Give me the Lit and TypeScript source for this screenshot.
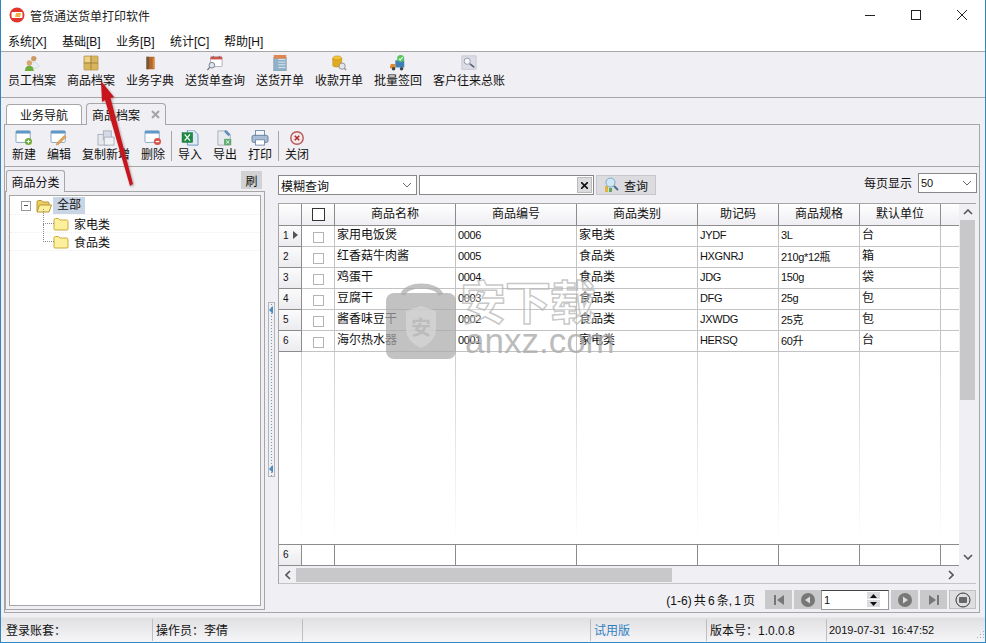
import { LitElement, html, css } from 'lit';
import { customElement } from 'lit/decorators.js';

const icons: Record<string, unknown> = {
  staff: html`<svg width="18" height="18" viewBox="0 0 18 18"><circle cx="11" cy="4" r="3" fill="#c99a63"/><path d="M6 14c0-4 3-6 5-6s5 1 6 5l-3 2z" fill="#e8eef2" stroke="#b8c4cc" stroke-width=".5"/><circle cx="6" cy="9" r="3" fill="#d8a673"/><path d="M1 18c0-4 2-6 5-6s5 2 5 6z" fill="#6fae3a"/></svg>`,
  goods: html`<svg width="18" height="18" viewBox="0 0 18 18"><rect x="1" y="1" width="16" height="16" rx="1" fill="#d9b45c" stroke="#a88a45" stroke-width=".6"/><path d="M9 1v16M1 9h16" stroke="#8f7438" stroke-width=".8"/><rect x="2" y="2" width="6" height="6" fill="#ecd28a"/></svg>`,
  dict: html`<svg width="18" height="18" viewBox="0 0 18 18"><rect x="5" y="2" width="9" height="14" fill="#b5662b"/><rect x="5" y="2" width="3" height="14" fill="#6f5a3c"/><rect x="12" y="3" width="2" height="12" fill="#d98c3e"/></svg>`,
  query: html`<svg width="18" height="18" viewBox="0 0 18 18"><rect x="4" y="2" width="13" height="11" rx="1" fill="#fff" stroke="#9a9aa4" stroke-width=".8"/><rect x="4" y="2" width="13" height="3" fill="#d9534a"/><path d="M7 1v3M14 1v3" stroke="#666" stroke-width="1"/><circle cx="5.500" cy="11.500" r="3.200" fill="#dde6f0" stroke="#6c7684" stroke-width="1"/><path d="M3 14l-2.500 3" stroke="#6c7684" stroke-width="1.500"/></svg>`,
  delivery: html`<svg width="18" height="18" viewBox="0 0 18 18"><rect x="2" y="3" width="14" height="15" fill="#8fb2c9" stroke="#7a8d9a" stroke-width=".6"/><rect x="2" y="0" width="14" height="4" fill="#e0854f"/><path d="M7 5h8M7 8h8M7 11h8M7 14h8" stroke="#dfe8ee" stroke-width="1"/></svg>`,
  coins: html`<svg width="18" height="18" viewBox="0 0 18 18"><ellipse cx="7" cy="4" rx="5" ry="3" fill="#f2c230" stroke="#b98a16" stroke-width=".6"/><path d="M2 4v8c0 2 10 2 10 0V4c0 2-10 2-10 0z" fill="#e3a91f" stroke="#b98a16" stroke-width=".6"/><circle cx="12.500" cy="12.500" r="3.500" fill="#e6e6ea" stroke="#8c8c94" stroke-width="1"/><path d="M15 15l2 2" stroke="#8c8c94" stroke-width="1.500"/></svg>`,
  truck: html`<svg width="18" height="18" viewBox="0 0 18 18"><rect x="6" y="6" width="10" height="8" fill="#3f7fb8"/><path d="M1 10h5v5H0v-2z" fill="#e08a2c"/><circle cx="4" cy="15.500" r="2" fill="#444"/><circle cx="13" cy="15.500" r="2" fill="#444"/><circle cx="12" cy="4" r="4" fill="#55c65a"/><path d="M10 4l1.500 1.500L14.300 2.500" stroke="#fff" stroke-width="1.200" fill="none"/></svg>`,
  ledger: html`<svg width="18" height="18" viewBox="0 0 18 18"><rect x="1" y="1" width="16" height="15" fill="#dcdce6" stroke="#b4b4c0" stroke-width=".6"/><circle cx="7" cy="7" r="3.500" fill="#f4f6fa" stroke="#8d93a3" stroke-width="1"/><path d="M10 10l5 4" stroke="#5c6270" stroke-width="1.800"/></svg>`,
  add: html`<svg width="20" height="18" viewBox="0 0 20 18"><rect x="1" y="1" width="16" height="13" rx="1" fill="#fff" stroke="#7d9fbd"/><rect x="1" y="1" width="16" height="3" fill="#5f97c9"/><circle cx="15" cy="13" r="4" fill="#70ad3a"/><path d="M13 13h4M15 11v4" stroke="#fff" stroke-width="1.200"/></svg>`,
  edit: html`<svg width="20" height="18" viewBox="0 0 20 18"><rect x="1" y="1" width="16" height="13" rx="1" fill="#fff" stroke="#7d9fbd"/><rect x="1" y="1" width="16" height="3" fill="#5f97c9"/><path d="M8 14l8-8 2 2-8 8-3 1z" fill="#e3a659" stroke="#b97f3a" stroke-width=".5"/></svg>`,
  copy: html`<svg width="20" height="18" viewBox="0 0 20 18"><rect x="1" y="5" width="11" height="12" fill="#e6e9ee" stroke="#a6adb8"/><rect x="7" y="1" width="9" height="10" fill="#d3dbe6" stroke="#a6adb8"/><rect x="8" y="8" width="11" height="9" fill="#f0f2f5" stroke="#a6adb8"/></svg>`,
  del: html`<svg width="20" height="18" viewBox="0 0 20 18"><rect x="1" y="1" width="16" height="13" rx="1" fill="#fff" stroke="#7d9fbd"/><rect x="1" y="1" width="16" height="3" fill="#5f97c9"/><circle cx="15" cy="13" r="4" fill="#d9534a"/><path d="M13 13h4" stroke="#fff" stroke-width="1.400"/></svg>`,
  imp: html`<svg width="20" height="18" viewBox="0 0 20 18"><path d="M7 0h7l5 5v12H7z" fill="#dfeaf6" stroke="#5f8fbf"/><rect x="1" y="3" width="12" height="11" fill="#1f8a45" stroke="#176b35" stroke-width=".5"/><path d="M4 5l6 7M10 5l-6 7" stroke="#fff" stroke-width="1.400"/></svg>`,
  exp: html`<svg width="20" height="18" viewBox="0 0 20 18"><path d="M2 1h10l4 4v12H2z" fill="#e8eaee" stroke="#a7adb6"/><path d="M11 0l5 5-2 2-5-5z" fill="#5f8fbf"/><rect x="9" y="10" width="8" height="7" fill="#5aa86a"/><path d="M11 11.500l4 4M15 11.500l-4 4" stroke="#fff"/></svg>`,
  print: html`<svg width="20" height="18" viewBox="0 0 20 18"><rect x="5" y="0.500" width="10" height="7" fill="#f5f7fa" stroke="#6d88a8"/><rect x="1" y="6" width="18" height="8" rx="2" fill="#a9bed6" stroke="#5f7894"/><rect x="5" y="11" width="10" height="6" fill="#fff" stroke="#6d88a8"/></svg>`,
  close: html`<svg width="20" height="18" viewBox="0 0 20 18"><circle cx="10" cy="9" r="7" fill="#f4e9e9" stroke="#b65a5a" stroke-width="1.600"/><path d="M7.500 6.500l5 5M12.500 6.500l-5 5" stroke="#b02a2a" stroke-width="1.800"/></svg>`,
};

const nav = [
  ['staff', '员工档案'], ['goods', '商品档案'], ['dict', '业务字典'], ['query', '送货单查询'],
  ['delivery', '送货开单'], ['coins', '收款开单'], ['truck', '批量签回'], ['ledger', '客户往来总账'],
];
const actions = [
  ['add', '新建'], ['edit', '编辑'], ['copy', '复制新增'], ['del', '删除'], null,
  ['imp', '导入'], ['exp', '导出'], ['print', '打印'], null, ['close', '关闭'],
];
const menus = ['系统[X]', '基础[B]', '业务[B]', '统计[C]', '帮助[H]'];
const heads = ['商品名称', '商品编号', '商品类别', '助记码', '商品规格', '默认单位'];
const rows = [
  ['家用电饭煲', '0006', '家电类', 'JYDF', '3L', '台'],
  ['红香菇牛肉酱', '0005', '食品类', 'HXGNRJ', '210g*12瓶', '箱'],
  ['鸡蛋干', '0004', '食品类', 'JDG', '150g', '袋'],
  ['豆腐干', '0003', '食品类', 'DFG', '25g', '包'],
  ['酱香味豆干', '0002', '食品类', 'JXWDG', '25克', '包'],
  ['海尔热水器', '0001', '家电类', 'HERSQ', '60升', '台'],
];

const folder = () => html`<svg width="16" height="14" viewBox="0 0 16 14">
  <path d="M1 3q0-1.500 1.500-1.500h3L7 3h6.500Q15 3 15 4.500V12q0 1-1 1H2q-1 0-1-1z" fill="#fdf09c" stroke="#c9a93c"/>
</svg>`;
const openFolder = () => html`<svg width="16" height="14" viewBox="0 0 16 14">
  <path d="M1 12V3q0-1.500 1.500-1.500h3L7 3h5q1 0 1 1v2" fill="#eccf62" stroke="#b8962f"/>
  <path d="M1 13l2.500-7H15.500L13 13z" fill="#fdf09c" stroke="#b8962f" stroke-linejoin="round"/>
</svg>`;

@customElement('app-root')
class AppRoot extends LitElement {
  static styles = css`
    :host {
      display: block;
      font-family: "Liberation Sans", "Noto Sans CJK SC", sans-serif;
      font-size: 12px;
      color: #111;
    }
    .win {
      position: relative;
      width: 986px;
      height: 643px;
      box-sizing: border-box;
      display: flex;
      flex-direction: column;
      border: 1px solid #2f86c0;
      border-top: none;
      background: #f0eff3;
      overflow: hidden;
    }
    .title {
      height: 30px;
      display: flex;
      align-items: center;
      background: #fff;
      padding-left: 8px;
      flex: none;
    }
    .title .name { margin-left: 5px; color: #222; }
    .win-btns { margin-left: auto; display: flex; }
    .win-btns span { width: 46px; height: 30px; display: flex; align-items: center; justify-content: center; }
    .menu {
      height: 21px;
      display: flex;
      align-items: center;
      gap: 14px;
      padding-left: 7px;
      background: #fff;
      flex: none;
    }
    .menu span { width: 40px; white-space: nowrap; }
    .nav {
      height: 47px;
      box-sizing: border-box;
      border-top: 1px solid #a6a6a6;
      border-bottom: 1px solid #a6a6a6;
      display: flex;
      gap: 11px;
      padding-left: 7px;
      flex: none;
    }
    .tool {
      display: flex;
      flex-direction: column;
      align-items: center;
      white-space: nowrap;
      line-height: 16px;
    }
    .nav .tool svg { width: 16px; height: 16px; margin-top: 3px; margin-bottom: 2px; }
    .tabs {
      height: 26px;
      display: flex;
      align-items: flex-end;
      padding-left: 5px;
      gap: 4px;
      flex: none;
    }
    .tab {
      height: 20px;
      width: 76px;
      box-sizing: border-box;
      border: 1px solid #a6a6a6;
      border-bottom: none;
      border-radius: 4px 4px 0 0;
      display: flex;
      align-items: center;
      justify-content: center;
      background: #fff;
    }
    .tab.on {
      height: 22px;
      width: 80px;
      background: #f0eff3;
      justify-content: flex-start;
      padding-left: 5px;
      margin-bottom: -1px;
      position: relative;
    }
    .tab.on svg { margin-left: 11px; }
    .panel {
      flex: 1;
      min-height: 0;
      margin: 0 5px 3px 3px;
      border: 1px solid #a6a6a6;
      display: flex;
      flex-direction: column;
    }
    .actions {
      height: 42px;
      box-sizing: border-box;
      border-bottom: 1px solid #a6a6a6;
      display: flex;
      gap: 11px;
      padding-left: 7px;
      flex: none;
    }
    .actions .tool svg { width: 18px; height: 16px; margin-top: 5px; margin-bottom: 1px; }
    .sep { width: 1px; height: 30px; background: #a6a6a6; margin: 6px -5px 0 -5px; }
    .body { flex: 1; min-height: 0; display: flex; }
    .left { width: 260px; flex: none; display: flex; flex-direction: column; padding-top: 3px; box-sizing: border-box; }
    .left-head { height: 21px; display: flex; flex: none; align-items: flex-start; }
    .left-tab {
      margin-left: 1px;
      width: 59px;
      height: 22px;
      box-sizing: border-box;
      border: 1px solid #a6a6a6;
      border-bottom: none;
      border-radius: 3px 3px 0 0;
      display: flex;
      align-items: center;
      justify-content: center;
      background: #f0eff3;
      position: relative;
    }
    .refresh {
      margin-left: auto;
      margin-right: 3px;
      margin-top: 1px;
      width: 21px;
      height: 18px;
      background: #d2d2d5;
      display: flex;
      align-items: center;
      justify-content: center;
    }
    .tree-box {
      flex: 1;
      margin-bottom: 2px;
      border: 1px solid #a6a6a6;
      padding: 3px;
      display: flex;
    }
    .tree {
      flex: 1;
      background: #fff;
      border: 1px solid #a6a6a6;
      padding-top: 1px;
    }
    .node {
      height: 18px;
      display: flex;
      align-items: center;
      border-bottom: 1px dotted #eee;
      box-sizing: border-box;
      position: relative;
    }
    .node .minus {
      width: 8px; height: 8px; margin-left: 11px; border: 1px solid #999; display: flex; align-items: center; justify-content: center;
      background: #fff;
    }
    .node .minus::after { content: ""; width: 4px; height: 1px; background: #555; }
    .node.root svg { margin-left: 5px; }
    .sel { margin-left: 1px; padding: 0 4px; background: #c9d5e4; line-height: 17px; }
    .node.leaf svg { margin-left: 43px; }
    .node.leaf span { margin-left: 5px; }
    .node.leaf::before {
      content: ""; position: absolute; left: 33px; top: -6px; width: 10px; height: 14px;
      border-left: 1px dotted #888; border-bottom: 1px dotted #888;
    }
    .node.leaf.last::before { top: -9px; height: 17px; }
    .split { width: 13px; flex: none; display: flex; align-items: center; justify-content: center; }
    .split .grip {
      width: 7px;
      height: 175px;
      box-sizing: border-box;
      border: 1px solid #b5b5b8;
      background: radial-gradient(circle, #6f9cc4 0.7px, transparent 0.9px) 1px 0 / 3px 3px repeat-y;
      position: relative;
    }
    .grip::before, .grip::after {
      content: ""; position: absolute; left: 0; border: 4px solid transparent; border-right: 4px solid #4a8ec4; border-left: none;
    }
    .grip::before { top: 3px; }
    .grip::after { bottom: 3px; }
    .right { flex: 1; min-width: 0; display: flex; flex-direction: column; padding: 6px 2px 3px 0; box-sizing: border-box; }
    .filter { height: 22px; display: flex; margin-bottom: 8px; flex: none; align-items: flex-start; }
    .combo {
      height: 20px;
      box-sizing: border-box;
      background: #fff;
      border: 1px solid #888;
      display: flex;
      align-items: center;
      padding-left: 2px;
      position: relative;
    }
    .combo.mode { width: 139px; margin-top: 2px; }
    .combo.text { width: 175px; margin: 2px 0 0 2px; }
    .chev { margin-left: auto; margin-right: 4px; }
    .clear {
      margin-left: auto;
      margin-right: 1px;
      width: 15px;
      height: 16px;
      background: #dcdce0;
      border: 1px solid #bbb;
      box-sizing: border-box;
      display: flex;
      align-items: center;
      justify-content: center;
    }
    .search {
      width: 60px;
      height: 20px;
      box-sizing: border-box;
      margin: 2px 0 0 2px;
      background: #dcdce0;
      border: 1px solid #c8c8cc;
      display: flex;
      align-items: center;
      justify-content: center;
      gap: 4px;
    }
    .per-page { margin-left: auto; margin-top: 3px; line-height: 16px; }
    .combo.size { width: 59px; margin-left: 6px; }
    .grid-wrap {
      flex: 1;
      min-height: 0;
      margin-right: 1px;
      display: flex;
      flex-direction: column;
      border-left: 1px solid #a6a6a6;
      border-top: 1px solid #a6a6a6;
      border-bottom: 1px solid #c4c4c4;
    }
    .grid-main { flex: 1; min-height: 0; display: flex; }
    .grid { flex: 1; min-width: 0; display: flex; flex-direction: column; background: #fff; }
    .row {
      display: grid;
      grid-template-columns: 23px 33px 121px 121px 121px 81px 81px 81px 1fr;
      height: 21px;
      box-sizing: border-box;
      border-bottom: 1px solid #c3c3c3;
      flex: none;
    }
    .row > div {
      border-right: 1px solid #c3c3c3;
      display: flex;
      align-items: center;
      padding: 0 0 5px 2px;
      white-space: nowrap;
      overflow: hidden;
    }
    .row > div:last-child { border-right: none; }
    .row .head { background: linear-gradient(#fff, #f0eff3 90%); justify-content: center; padding: 0 0 4px; }
    .row.top { height: 22px; border-bottom-color: #8c8c8c; }
    .row.top > div { border-right-color: #8c8c8c; }
    .row .rh {
      background: linear-gradient(#fbfbfc, #ecebef);
      padding: 0 0 2px 4px;
      font-size: 10px;
      border-right-color: #8c8c8c;
      box-shadow: 0 1px #8c8c8c;
    }
    .row .ck { justify-content: center; padding: 0; }
    .row .lat { font-size: 11px; letter-spacing: -0.35px; padding-bottom: 3px; }
    .box { width: 11px; height: 11px; box-sizing: border-box; border: 1px solid #b4b4b4; background: #fff; margin-top: 2px; }
    .box.big { width: 13px; height: 13px; border-color: #333; margin: 0 0 -4px; }
    .mark { margin-left: 4px; width: 0; height: 0; border: 4px solid transparent; border-left: 5px solid #555; border-right: none; }
    .row.blank { flex: 1; height: auto; border-bottom: none; }
    .row.blank > div {
      border-right: none;
      background: linear-gradient(#cfcfcf, #fff) right / 1px 100% no-repeat;
    }
    .foot { border-top: 1px solid #8c8c8c; border-bottom: 1px solid #8c8c8c; height: 22px; background: #fff; }
    .foot > div { border-right-color: #8c8c8c; }
    .foot .rh { box-shadow: none; }
    .vbar { width: 17px; flex: none; background: #f0eff3; display: flex; flex-direction: column; align-items: center; }
    .vbar .thumb { width: 15px; height: 180px; background: #c8c8cb; }
    .vbar .up { height: 16px; display: flex; align-items: center; }
    .vbar .down { margin-top: auto; height: 18px; display: flex; align-items: center; }
    .hbar { height: 17px; flex: none; display: flex; align-items: center; padding-right: 17px; }
    .hbar .arr { width: 17px; display: flex; justify-content: center; flex: none; }
    .hbar .thumb { width: 376px; height: 14px; background: #c8c8cb; }
    .hbar .end { margin-left: auto; }
    .pager { height: 19px; margin-top: 6px; flex: none; display: flex; align-items: center; justify-content: flex-end; gap: 2px; padding-right: 1px; }
    .pager .info { margin-right: 8px; word-spacing: -1.2px; }
    .pg { width: 27px; height: 19px; background: #c9c9cc; display: flex; align-items: center; justify-content: center; }
    .pg.light { background: #dedee1; border: 1px solid #c0c0c0; box-sizing: border-box; }
    .page-no {
      width: 68px; height: 20px; box-sizing: border-box; margin: 0 0 0 -2px; background: #fff; border: 1px solid #999; border-top-color: #444;
      display: flex; align-items: center; padding-left: 2px; font-size: 11px;
    }
    .spin { margin-left: auto; margin-right: 8px; display: flex; flex-direction: column; gap: 1px; }
    .spin i { width: 13px; height: 7px; background: #dcdce0; display: flex; align-items: center; justify-content: center; }
    .status {
      height: 26px;
      flex: none;
      box-sizing: border-box;
      padding-top: 1px;
      display: grid;
      grid-template-columns: 152px 150px 288px 116px 120px 1fr;
      background: linear-gradient(#f0eff3 1px, #e0e0e3 2px, #f6f6f8);
      align-items: center;
    }
    .status > div { height: 22px; display: flex; align-items: center; padding-left: 3px; white-space: nowrap; border-right: 1px solid #bdbdc2; box-sizing: border-box; }
    .status > div:first-child { padding-left: 5px; }
    .status .trial { color: #2f7fc1; }
    .status .clock { border-right: none; padding-left: 2px; font-size: 11px; }
    .status .clock svg { margin-left: auto; margin-top: 10px; }
    .lat-s { font-size: 11px; }
    .arrow { position: absolute; left: 91px; top: 78px; pointer-events: none; filter: drop-shadow(1px 1px 1px rgba(90, 60, 60, 0.45)); }
    .mark-bag { position: absolute; left: 384px; top: 279px; pointer-events: none; }
    .mark-bag text { font-size: 20px; font-weight: 700; fill: rgba(170, 170, 170, 0.55); }
    .mark-text {
      position: absolute;
      left: 459px;
      top: 276px;
      font-size: 46px;
      line-height: 54px;
      letter-spacing: -1px;
      font-weight: 700;
      color: rgba(255, 255, 255, 0.3);
      -webkit-text-stroke: 1.5px rgba(176, 176, 176, 0.7);
      pointer-events: none;
    }
    .mark-site {
      position: absolute;
      left: 464px;
      top: 321px;
      font-size: 35px;
      line-height: 40px;
      color: rgba(170, 170, 170, 0.8);
      pointer-events: none;
    }
  `;

  render() {
    return html`
      <div class="win">
        <div class="title">
          <svg width="16" height="16" viewBox="0 0 16 16">
            <circle cx="8" cy="8" r="7.500" fill="#e2352c"/>
            <rect x="2.500" y="5" width="11" height="6" rx="1" fill="#fff"/>
            <path d="M7 6h5l-1 4H6z" fill="#eeb44a"/>
          </svg>
          <span class="name">管货通送货单打印软件</span>
          <div class="win-btns">
            <span><svg width="10" height="10"><path d="M0 5.500h10" stroke="#222"/></svg></span>
            <span><svg width="10" height="10"><rect x=".5" y=".5" width="9" height="9" fill="none" stroke="#222"/></svg></span>
            <span><svg width="10" height="10"><path d="M0 0l10 10M10 0L0 10" stroke="#222"/></svg></span>
          </div>
        </div>
        <div class="menu">${menus.map(m => html`<span>${m}</span>`)}</div>
        <div class="nav">
          ${nav.map(([k, label]) => html`<div class="tool">${icons[k]}<span>${label}</span></div>`)}
        </div>
        <div class="tabs">
          <div class="tab">业务导航</div>
          <div class="tab on">商品档案<svg width="9" height="9"><path d="M1 1l7 7M8 1L1 8" stroke="#a4a4a8" stroke-width="2"/></svg></div>
        </div>
        <div class="panel">
          <div class="actions">
            ${actions.map(a => a
              ? html`<div class="tool">${icons[a[0]]}<span>${a[1]}</span></div>`
              : html`<div class="sep"></div>`)}
          </div>
          <div class="body">
            <div class="left">
              <div class="left-head">
                <div class="left-tab">商品分类</div>
                <div class="refresh">刷</div>
              </div>
              <div class="tree-box">
                <div class="tree">
                  <div class="node root"><span class="minus"></span>${openFolder()}<span class="sel">全部</span></div>
                  <div class="node leaf">${folder()}<span>家电类</span></div>
                  <div class="node leaf last">${folder()}<span>食品类</span></div>
                </div>
              </div>
            </div>
            <div class="split"><div class="grip"></div></div>
            <div class="right">
              <div class="filter">
                <div class="combo mode">模糊查询
                  <svg class="chev" width="10" height="6"><path d="M1 1l4 4 4-4" fill="none" stroke="#666"/></svg>
                </div>
                <div class="combo text">
                  <span class="clear"><svg width="7" height="7"><path d="M0 0l7 7M7 0L0 7" stroke="#111" stroke-width="1.600"/></svg></span>
                </div>
                <div class="search">
                  <svg width="16" height="16" viewBox="0 0 16 16">
                    <rect x="1" y="9" width="3" height="6" fill="#e2b23f"/>
                    <rect x="5" y="11" width="3" height="4" fill="#63a75b"/>
                    <circle cx="6.500" cy="5.500" r="4.500" fill="#cfe6f5" stroke="#7ea6c4"/>
                    <path d="M10 9l4 4" stroke="#4c6f8c" stroke-width="2"/>
                  </svg>
                  查询
                </div>
                <div class="per-page">每页显示</div>
                <div class="combo size"><span class="lat-s">50</span>
                  <svg class="chev" width="10" height="6"><path d="M1 1l4 4 4-4" fill="none" stroke="#666"/></svg>
                </div>
              </div>
              <div class="grid-wrap">
                <div class="grid-main">
                  <div class="grid">
                    <div class="row top">
                      <div class="head"></div>
                      <div class="head"><span class="box big"></span></div>
                      ${heads.map(h => html`<div class="head">${h}</div>`)}
                      <div class="head"></div>
                    </div>
                    ${rows.map((r, i) => html`
                      <div class="row">
                        <div class="rh">${i + 1}${i === 0 ? html`<span class="mark"></span>` : ''}</div>
                        <div class="ck"><span class="box"></span></div>
                        <div>${r[0]}</div>
                        <div class="lat">${r[1]}</div>
                        <div>${r[2]}</div>
                        <div class="lat">${r[3]}</div>
                        <div class="lat">${r[4]}</div>
                        <div>${r[5]}</div>
                        <div></div>
                      </div>`)}
                    <div class="row blank">
                      <div></div><div></div><div></div><div></div><div></div><div></div><div></div><div></div>
                    </div>
                    <div class="row foot">
                      <div class="rh">6</div><div></div><div></div><div></div><div></div><div></div><div></div><div></div><div></div>
                    </div>
                  </div>
                  <div class="vbar">
                    <span class="up"><svg width="10" height="6"><path d="M1 5l4-4 4 4" fill="none" stroke="#555" stroke-width="1.600"/></svg></span>
                    <div class="thumb"></div>
                    <span class="down"><svg width="10" height="6"><path d="M1 1l4 4 4-4" fill="none" stroke="#555" stroke-width="1.600"/></svg></span>
                  </div>
                </div>
                <div class="hbar">
                  <span class="arr"><svg width="6" height="10"><path d="M5 1L1 5l4 4" fill="none" stroke="#555" stroke-width="1.600"/></svg></span>
                  <div class="thumb"></div>
                  <span class="arr end"><svg width="6" height="10"><path d="M1 1l4 4-4 4" fill="none" stroke="#555" stroke-width="1.600"/></svg></span>
                </div>
              </div>
              <div class="pager">
                <span class="info">(1-6) 共 6 条, 1 页</span>
                <span class="pg"><svg width="12" height="10"><path d="M1 0h2v10H1zM11 0v10L4 5z" fill="#777"/></svg></span>
                <span class="pg"><svg width="14" height="14"><circle cx="7" cy="7" r="7" fill="#777"/><path d="M9 3.500v7L4 7z" fill="#ddd"/></svg></span>
                <span class="page-no">1
                  <span class="spin">
                    <i><svg width="7" height="4"><path d="M0 4l3.500-4L7 4z" fill="#111"/></svg></i>
                    <i><svg width="7" height="4"><path d="M0 0l3.500 4L7 0z" fill="#111"/></svg></i>
                  </span>
                </span>
                <span class="pg"><svg width="14" height="14"><circle cx="7" cy="7" r="7" fill="#777"/><path d="M5 3.500v7L10 7z" fill="#ddd"/></svg></span>
                <span class="pg"><svg width="12" height="10"><path d="M1 0v10l7-5zM9 0h2v10H9z" fill="#777"/></svg></span>
                <span class="pg light"><svg width="16" height="16"><circle cx="8" cy="8" r="7" fill="none" stroke="#333"/><rect x="4" y="5" width="8" height="6" rx="1" fill="#666"/></svg></span>
              </div>
            </div>
          </div>
        </div>
        <div class="status">
          <div>登录账套：</div>
          <div>操作员：李倩</div>
          <div></div>
          <div class="trial">试用版</div>
          <div>版本号：1.0.0.8</div>
          <div class="clock">2019-07-31&nbsp;&nbsp;16:47:52
            <svg width="10" height="10"><path d="M8 1h1v1H8zM5 4h1v1H5zM8 4h1v1H8zM2 7h1v1H2zM5 7h1v1H5zM8 7h1v1H8z" fill="#aaa"/></svg>
          </div>
        </div>
        <svg class="arrow" width="50" height="115" viewBox="0 0 50 115">
          <path d="M9 3L22 19L18.500 20L41 106L38 108L13 22L10 24z" fill="#c8141c"/>
        </svg>
        <svg class="mark-bag" width="74" height="82" viewBox="0 0 74 82">
          <path d="M18 16C20 4 52 4 56 16" fill="none" stroke="rgba(170,170,170,.72)" stroke-width="5"/>
          <rect x="1" y="14" width="70" height="66" rx="8" fill="rgba(170,170,170,.72)"/>
          <path d="M21 32l15-5 15 5v18q0 12-15 19-15-7-15-19z" fill="rgba(215,215,215,.7)"/>
          <text x="26" y="56">安</text>
        </svg>
        <div class="mark-text">安下载</div>
        <div class="mark-site">anxz.com</div>
      </div>
    `;
  }
}
